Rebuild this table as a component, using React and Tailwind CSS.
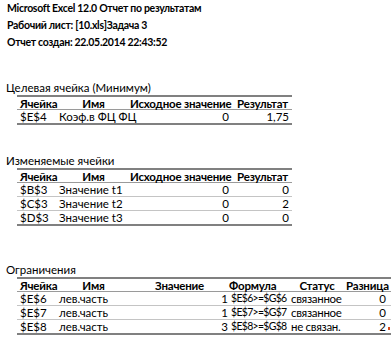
import React from "react";

const font = { fontFamily: "Lato, 'Liberation Sans', sans-serif" };

const targetRows = [["$E$4", "Коэф.в ФЦ ФЦ", "0", "1,75"]];

const changeRows = [
  ["$B$3", "Значение t1", "0", "0"],
  ["$C$3", "Значение t2", "0", "2"],
  ["$D$3", "Значение t3", "0", "0"],
];

const limitRows = [
  ["$E$6", "лев.часть", "1", "$E$6>=$G$6", "связанное", "0"],
  ["$E$7", "лев.часть", "1", "$E$7>=$G$7", "связанное", "0"],
  ["$E$8", "лев.часть", "3", "$E$8>=$G$8", "не связан.", "2"],
];

const Caption = ({ children, className }) => (
  <div className={"h-[14px] leading-[14px] pl-[6px] " + className}>{children}</div>
);

const CellTable = ({ rows }) => (
  <div className="ml-[17px] w-[275px]">
    <div className="grid grid-cols-[40px_73px_100px_62px] h-[15px] leading-[13px] border-t-2 border-t-[#808080] border-b border-b-[#9a9a9a] font-bold tracking-[-0.2px]">
      <div className="pl-[3px]">Ячейка</div>
      <div className="text-center">Имя</div>
      <div className="text-right pr-[2px] whitespace-nowrap">Исходное значение</div>
      <div className="text-right pr-[4px]">Результат</div>
    </div>
    {rows.map((r, i) => (
      <div
        key={r[0]}
        className={
          "grid grid-cols-[40px_73px_100px_62px] h-[14px] leading-[13px] border-b " +
          (i === rows.length - 1 ? "border-b-2 border-b-[#808080] h-[15px]" : "border-b-[#c4c4c4]")
        }
      >
        <div className="pl-[3px]">{r[0]}</div>
        <div className="pl-[2px] whitespace-nowrap">{r[1]}</div>
        <div className="text-right pr-[1px]">{r[2]}</div>
        <div className="text-right pr-[3px]">{r[3]}</div>
      </div>
    ))}
  </div>
);

export default function App() {
  return (
    <div className="w-[391px] h-[341px] bg-white text-black text-[11.5px] overflow-hidden" style={font}>
      <div className="pl-[7px] font-bold leading-[17px] text-[10.5px] tracking-[-0.3px]">
        <div>Microsoft Excel 12.0 Отчет по результатам</div>
        <div>Рабочий лист: [10.xls]Задача 3</div>
        <div>Отчет создан: 22.05.2014 22:43:52</div>
      </div>

      <Caption className="mt-[30px]">Целевая ячейка (Минимум)</Caption>
      <CellTable rows={targetRows} />

      <Caption className="mt-[29px]">Изменяемые ячейки</Caption>
      <CellTable rows={changeRows} />

      <Caption className="mt-[37px]">Ограничения</Caption>
      <div className="ml-[17px] w-[374px]">
        <div className="grid grid-cols-[40px_73px_99px_59px_58px_42px_1fr] h-[15px] leading-[13px] border-t-2 border-t-[#808080] border-b border-b-[#9a9a9a] font-bold tracking-[-0.2px]">
          <div className="pl-[3px]">Ячейка</div>
          <div className="text-center">Имя</div>
          <div className="text-center">Значение</div>
          <div className="text-center pr-[14px]">Формула</div>
          <div className="text-center">Статус</div>
          <div className="text-right pr-[2px]">Разница</div>
          <div />
        </div>
        {limitRows.map((r, i) => (
          <div
            key={r[0]}
            className={
              "grid grid-cols-[40px_73px_99px_59px_58px_42px_1fr] h-[14px] leading-[13px] border-b " +
              (i === limitRows.length - 1 ? "border-b-2 border-b-[#808080] h-[15px]" : "border-b-[#c4c4c4]")
            }
          >
            <div className="pl-[3px]">{r[0]}</div>
            <div className="pl-[2px]">{r[1]}</div>
            <div className="text-right pr-[1px]">{r[2]}</div>
            <div className="pl-[2px] whitespace-nowrap text-[10.5px] tracking-[-0.7px]">{r[3]}</div>
            <div className="pl-[3px] whitespace-nowrap tracking-[-0.3px]">{r[4]}</div>
            <div className="text-right pr-[2px]">{r[5]}</div>
            <div className="flex items-end">
              {i === limitRows.length - 1 && <div className="w-[2px] h-[3px] mb-[3px] bg-[#d94a1a]" />}
            </div>
          </div>
        ))}
      </div>
    </div>
  );
}
